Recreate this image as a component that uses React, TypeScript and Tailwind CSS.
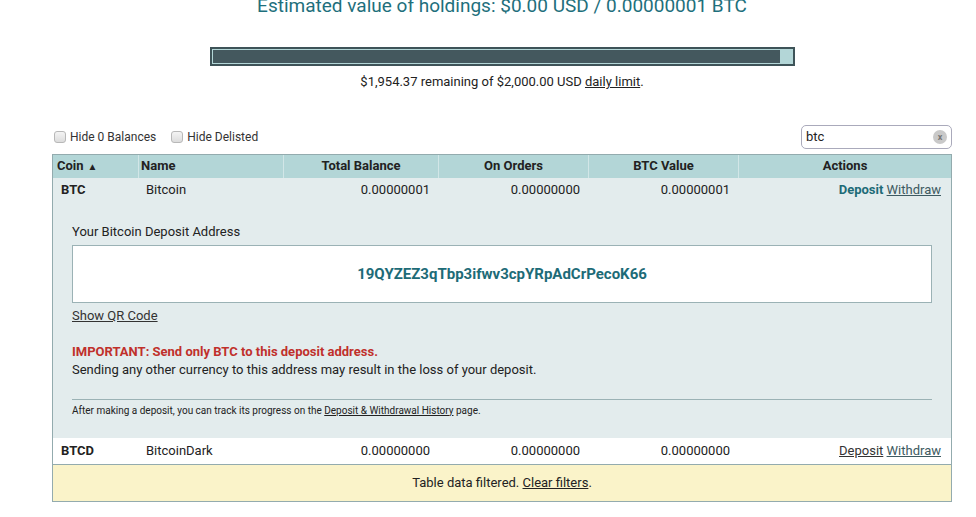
import React from 'react';

const font = { fontFamily: 'Roboto, "Liberation Sans", sans-serif' };

// --- small checkbox with label ---
const Check: React.FC<{ label: string }> = ({ label }) => (
  <label className="flex items-center gap-[4px] text-[12px] text-[#333]">
    <span className="w-[12px] h-[12px] rounded-[3px] border border-[#b8b8b8] bg-gradient-to-b from-[#f4f4f4] to-[#dcdcdc]" />
    {label}
  </label>
);

interface Row {
  coin: string;
  name: string;
  total: string;
  orders: string;
  btc: string;
  highlight?: boolean;
}

const cols = 'grid grid-cols-[86px_145px_155px_150px_150px_212px]';

const CoinRow: React.FC<{ row: Row; h: string; bg: string }> = ({ row, h, bg }) => (
  <div className={`${cols} ${h} ${bg} items-center text-[13px] text-[#222]`}>
    <div className="pl-[8px] font-bold">{row.coin}</div>
    <div className="pl-[7px]">{row.name}</div>
    <div className="pr-[9px] text-right">{row.total}</div>
    <div className="pr-[9px] text-right">{row.orders}</div>
    <div className="pr-[9px] text-right">{row.btc}</div>
    <div className="pr-[10px] text-right">
      {row.highlight ? (
        <span className="font-bold text-[#1d6b77]">Deposit</span>
      ) : (
        <span className="underline text-[#333]">Deposit</span>
      )}{' '}
      <span className="underline text-[#3d5a61]">Withdraw</span>
    </div>
  </div>
);

export default function App() {
  return (
    <div className="w-[976px] h-[517px] overflow-hidden bg-white" style={font}>
      <div className="ml-[52px] w-[900px] flex flex-col items-center">
        <h1 className="mt-[-7px] text-[19px] leading-[26px] text-[#1e6f7c]">
          Estimated value of holdings: $0.00 USD / 0.00000001 BTC
        </h1>

        {/* daily limit bar */}
        <div className="mt-[28px] w-[585px] h-[19px] border-2 border-[#3e5358] bg-[#b3d6d7] p-[1px] flex">
          <div className="w-[567px] h-full bg-[#44585e]" />
        </div>
        <p className="mt-[6px] text-[13px] text-[#222]">
          $1,954.37 remaining of $2,000.00 USD <span className="underline">daily limit</span>.
        </p>

        {/* filters */}
        <div className="mt-[33px] w-full flex items-center justify-between">
          <div className="flex items-center gap-[15px] pl-[2px]">
            <Check label="Hide 0 Balances" />
            <Check label="Hide Delisted" />
          </div>
          <div className="w-[151px] h-[24px] rounded-[5px] border border-[#aab] flex items-center justify-between pl-[4px] pr-[4px] text-[13px] text-[#222]">
            <span>btc</span>
            <span className="w-[14px] h-[14px] rounded-full bg-[#c9c9c9] text-[#777] text-[9px] leading-[14px] text-center font-bold">
              x
            </span>
          </div>
        </div>

        {/* balances table */}
        <div className="mt-[5px] w-full border border-[#93abae]">
          <div className={`${cols} h-[23px] bg-[#b3d6d7] items-center text-[13px] font-bold text-[#222]`}>
            <div className="pl-[4px] h-full flex items-center border-r border-[#d2e6e7]">
              Coin <span className="ml-[4px] text-[10px]">▲</span>
            </div>
            <div className="pl-[2px] h-full flex items-center border-r border-[#d2e6e7]">Name</div>
            <div className="h-full flex items-center justify-center border-r border-[#d2e6e7]">Total Balance</div>
            <div className="h-full flex items-center justify-center border-r border-[#d2e6e7]">On Orders</div>
            <div className="h-full flex items-center justify-center border-r border-[#d2e6e7]">BTC Value</div>
            <div className="h-full flex items-center justify-center">Actions</div>
          </div>

          <CoinRow
            row={{ coin: 'BTC', name: 'Bitcoin', total: '0.00000001', orders: '0.00000000', btc: '0.00000001', highlight: true }}
            h="h-[25px]"
            bg="bg-[#e3eced]"
          />

          {/* deposit panel */}
          <div className="bg-[#e3eced] h-[235px] px-[19px] pt-[20px] text-[13px] leading-[18px] text-[#222]">
            <div>Your Bitcoin Deposit Address</div>
            <div className="mt-[4px] h-[58px] bg-white border border-[#9bb2b5] flex items-center justify-center text-[15px] font-bold text-[#1d6b77]">
              19QYZEZ3qTbp3ifwv3cpYRpAdCrPecoK66
            </div>
            <div className="mt-[4px] underline text-[#333]">Show QR Code</div>
            <div className="mt-[18px] font-bold text-[#c0302b]">IMPORTANT: Send only BTC to this deposit address.</div>
            <div>Sending any other currency to this address may result in the loss of your deposit.</div>
            <div className="mt-[20px] border-t border-[#9bb2b5]" />
            <div className="mt-[5px] text-[10px] leading-[12px]">
              After making a deposit, you can track its progress on the{' '}
              <span className="underline">Deposit &amp; Withdrawal History</span> page.
            </div>
          </div>

          <CoinRow
            row={{ coin: 'BTCD', name: 'BitcoinDark', total: '0.00000000', orders: '0.00000000', btc: '0.00000000' }}
            h="h-[26px]"
            bg="bg-white"
          />

          <div className="h-[37px] border-t border-[#93abae] bg-[#faf3c9] flex items-center justify-center text-[13px] text-[#222]">
            Table data filtered.&nbsp;<span className="underline">Clear filters</span>.
          </div>
        </div>
      </div>
    </div>
  );
}
